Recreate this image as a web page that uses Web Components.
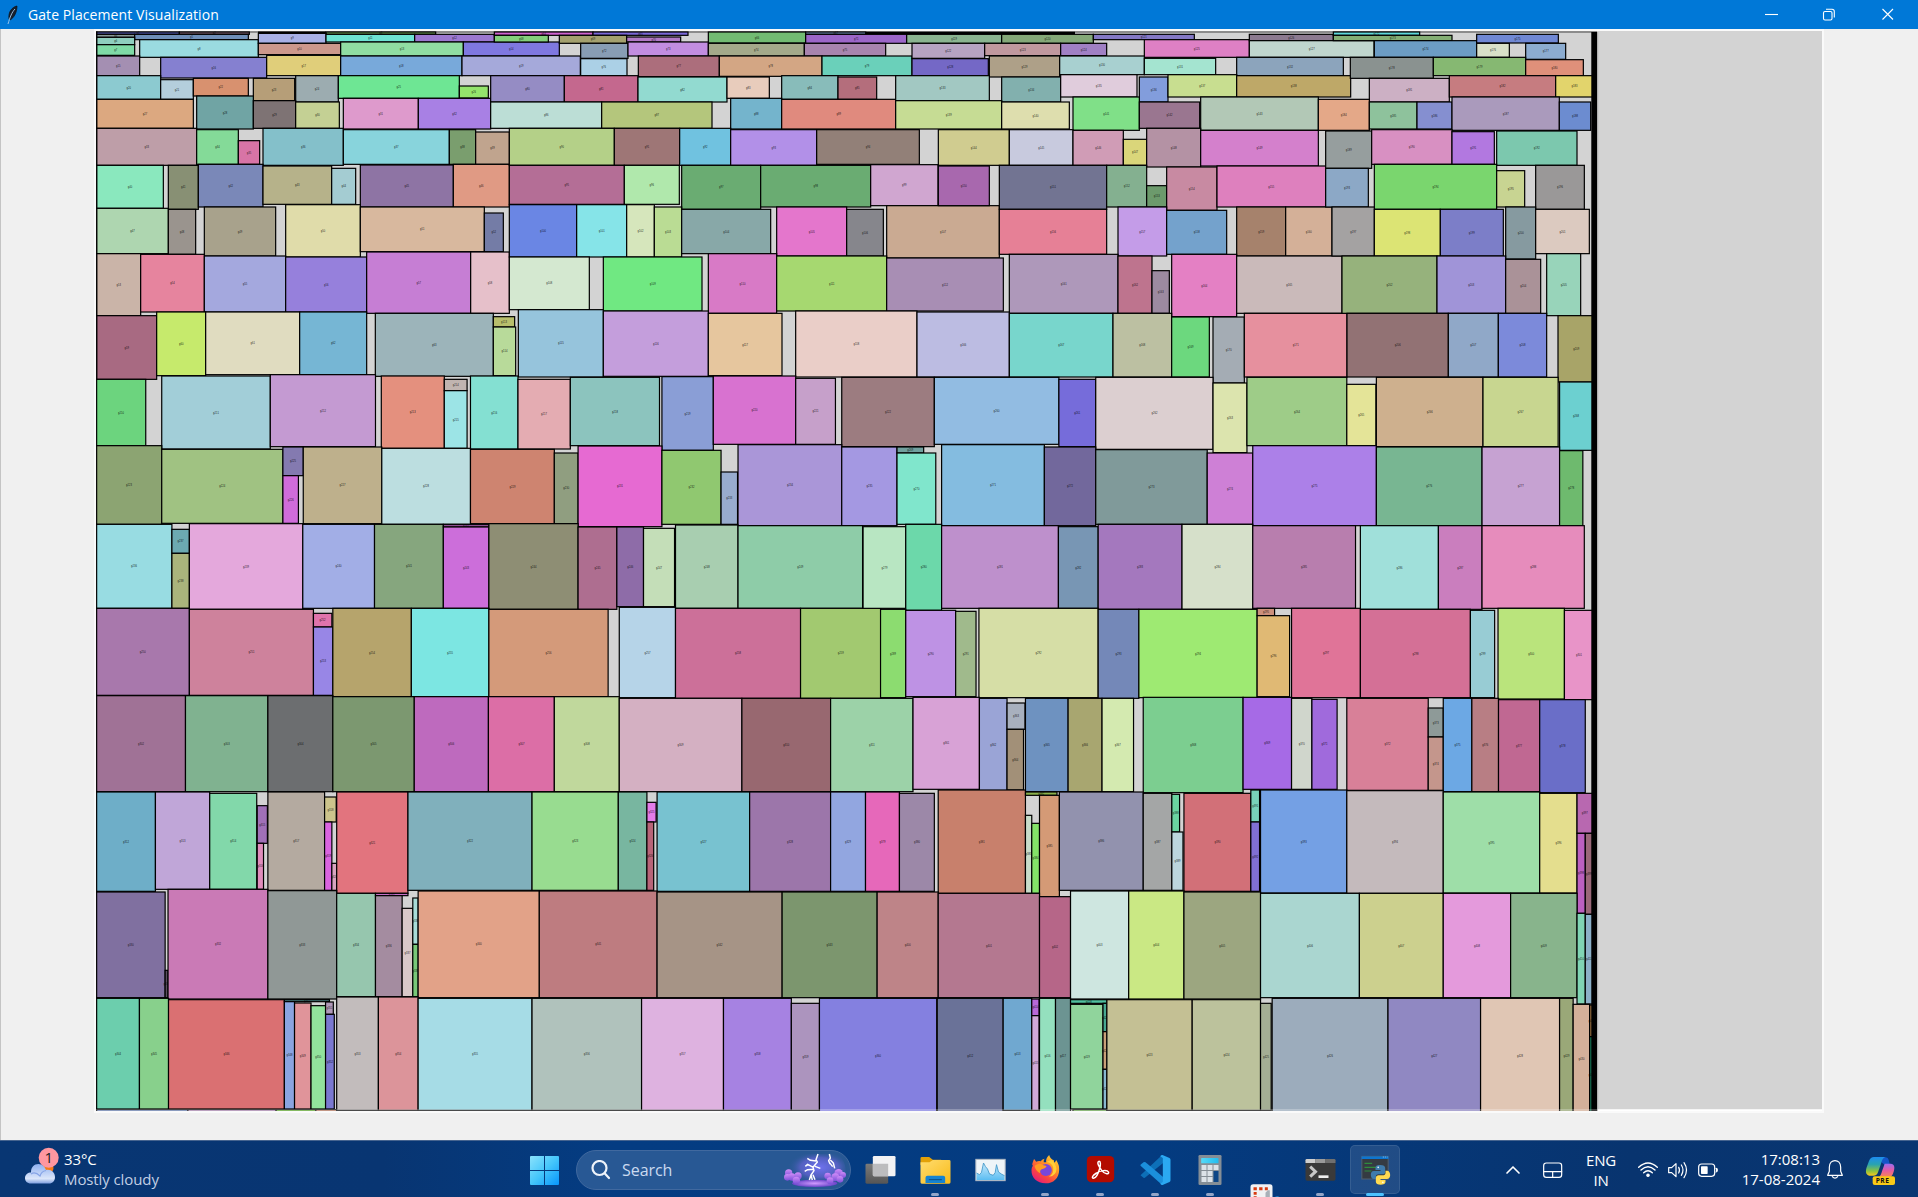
<!DOCTYPE html>
<html lang="en">
<head>
<meta charset="utf-8">
<title>Gate Placement Visualization</title>
<style>
html,body{margin:0;height:100%;overflow:hidden}
body{font-family:"Open Sans","Noto Sans",sans-serif}
</style>
</head>
<body>
<desktop-screen>
  <title-bar slot="title">Gate Placement Visualization</title-bar>
  <gate-board slot="content"></gate-board>
  <task-bar slot="taskbar"></task-bar>
</desktop-screen>
<script>
const define = (name, html, setup) => customElements.define(name, class extends HTMLElement {
  constructor() {
    super();
    this.attachShadow({ mode: 'open' }).innerHTML = html;
    if (setup) setup(this.shadowRoot, this);
  }
});

define('desktop-screen', `
<style>
:host{display:flex;flex-direction:column;width:1918px;height:1197px;overflow:hidden;background:#f0f0f0}
main{flex:1;min-height:0;display:flex;box-sizing:border-box;border-left:1px solid #c4c4c4}
</style>
<slot name="title"></slot><main><slot name="content"></slot></main><slot name="taskbar"></slot>`);

define('title-bar', `
<style>
:host{display:flex;align-items:center;height:29px;flex:none;background:#0078d7;color:#fff;font-size:14px}
.feather{width:18px;height:22px;margin:0 5px 0 5px;flex:none}
.name{flex:1;letter-spacing:.08px;line-height:29px}
.buttons{display:flex;margin-right:1px}
.buttons svg{width:58.5px;height:29px;display:block;fill:none;stroke:#fff;stroke-width:1.1}
</style>
<svg class="feather" viewBox="0 0 18 22"><path d="M12 2C7 3 3 8 4 15L5 16C9 14 12 8 12 2Z" fill="#18202c" stroke="#0a1018" stroke-width=".7"/><path d="M10 5C7 8 5 13 3 20" stroke="#a8cdee" stroke-width=".9" fill="none"/></svg>
<span class="name"><slot></slot></span>
<span class="buttons">
<svg viewBox="0 0 58.5 29"><path d="M23 14.5H36"/></svg>
<svg viewBox="0 0 58.5 29"><rect x="23.5" y="11.5" width="8.5" height="8.5" rx="1.5"/><path d="M26 9.2H32Q34.300 9.200 34.300 11.500V17.500"/></svg>
<svg viewBox="0 0 58.5 29"><path d="M23.500 9L34 19.500M34 9L23.500 19.500"/></svg>
</span>`);

/* Placement data. Each sheet has an origin and a scale; a gate is "x1 y1 x2 y2 colour" in sheet units. */
const sheets = [
[90,28,3,3,`20 12 268 19 6068c8;268 12 478 19 8a6a78;708 12 1037 19 74a85a;20 19 134 28 8a9a98;134 19 475 35 6f8fb8;20 28 134 50 8fcfbf;20 50 134 82 7fdba6;149 35 505 88 9adbe0;505 16 708 46 a8b0e6;505 46 752 80 cc988c;708 19 974 42 6ee3d3;974 19 1213 42 9c78d0;752 42 1120 84 90dda2;1120 42 1408 84 7f78e0;
20 84 149 143 a48fb2;212 88 530 150 8580d0;530 82 752 143 e0ce7a;752 84 1116 143 78a9da;1116 84 1471 143 a5a9da;
20 143 212 214 8ccad0;212 155 310 214 b4cedc;310 151 475 204 d8916f;490 151 614 218 b69e78;617 143 745 222 9cacb0;745 143 1108 211 6ee694;1108 174 1195 210 94e46c;
20 214 310 301 dca880;320 204 490 303 70a4a4;490 218 617 301 7e7374;617 222 748 301 c4d094;760 211 985 303 de9acc;985 211 1202 303 a880e4;
20 301 320 412 be9ea8;320 305 445 409 84da98;445 338 509 409 d874a6;519 301 760 412 84c0ca;760 305 1078 409 88d4dc;1078 305 1157 409 7a9e6e;1157 312 1258 409 c0a48e;
20 412 220 541 8ae8be;235 412 325 544 889074;325 409 519 537 7a88b8;519 414 725 529 b6b28a;725 421 797 529 a4ccd2;811 411 1090 537 8e74a4;1090 409 1258 537 e09a84;
20 541 235 677 aed6b0;235 544 317 679 9a948e;343 537 557 684 a8a28c;587 530 811 687 e0dcaa;811 537 1183 671 d8b89e;1183 555 1240 671 747ca6;
20 677 152 863 cab4a8;152 679 343 852 e6849e;343 684 587 852 a4a8de;587 687 830 852 9680dc;830 672 1142 856 c67ed4;1142 672 1258 856 e6c0ca;
20 863 200 1054 a86a82;200 852 347 1043 c6ea6c;347 852 629 1040 e0dcc0;629 852 830 1040 76b6d4;856 856 1210 1045 9cb4ba`],
[490,28,3,3,`13 12 309 22 cf62d0;309 12 594 22 7a68d8;655 12 947 45 72bb72;947 12 1127 19 7898c0;13 22 175 42 84d07c;208 22 410 46 a3a06e;410 27 572 42 b27ac6;947 19 1250 46 9c66c8;272 46 414 91 889db4;414 42 655 84 c28de0;655 46 943 84 a4a98a;943 46 1187 84 a884ae;
272 92 411 143 abd0e6;445 84 688 146 ac6e7c;688 84 996 145 d3a684;996 84 1266 143 6ad0ba;
2 143 223 222 958cc4;223 143 444 222 c4688e;444 147 711 222 92dad0;711 147 838 211 e8ccbc;875 143 1044 214 88bcba;1044 147 1160 214 b46e7c;
2 222 335 301 bcded6;335 222 666 301 b4c67c;722 211 875 303 74b4cc;875 214 1217 303 e08a7e;
58 301 373 412 b4d088;373 301 569 412 9e7676;569 301 722 412 70c2e0;722 305 980 412 b290e8;980 305 1288 409 928078;
58 412 403 529 b46e96;403 412 568 529 b0e8ac;575 412 812 544 6aac72;812 412 1142 537 6aac72;1142 410 1344 533 d0a6d0;
58 530 260 687 6a86e4;260 530 410 687 86e4e8;410 530 493 687 d6e6bc;493 537 575 687 badc94;575 544 842 677 88a8a8;860 537 1070 684 e476cc;1070 544 1180 684 86868c;1190 533 1528 690 caaa92;
58 687 298 845 d4e8d0;340 687 636 849 70e882;655 677 860 856 d87ac6;860 684 1190 849 a6d870;1190 690 1540 849 a88eb4;
10 866 74 897 b8be6c;10 897 77 1043 b8da9a;85 845 340 1047 96c4dc;340 849 655 1045 c49edc;655 856 876 1043 e6c69e;917 849 1281 1047 eacec8`],
[890,28,3,3,`50 19 335 46 8ab490;335 19 610 46 84a878;610 19 913 35 8478c4;66 46 284 91 b6a3c2;284 46 512 83 c0989e;512 46 650 83 a080c4;763 35 1078 88 de80c4;1078 19 1330 38 8c7a90;1078 38 1452 88 c0d6ce;
66 92 295 143 7468c6;298 84 509 147 aea088;509 84 763 140 a8d0d0;763 91 977 140 a4e4d0;1040 88 1360 143 8ca4bc;
17 143 298 218 a2c8c2;335 147 512 222 82b0ae;512 140 741 207 e0ccdc;748 147 834 222 829ddc;834 140 1040 207 c8de90;1040 143 1382 207 bea868;
17 218 335 303 c6dc94;335 222 538 303 dedeae;549 207 748 307 80e088;748 222 929 301 9a7690;932 207 1285 307 b2c8b6;
145 305 358 412 d0cc90;358 305 549 412 c8cade;549 307 700 412 d09cb6;700 334 770 412 dad67a;770 301 932 417 b492a4;932 307 1285 414 d480cc;
145 414 298 533 a868ae;328 412 650 544 727492;650 412 770 537 84b090;770 473 830 537 6c9a6c;830 417 981 547 c88aa2;981 414 1307 537 de80be;
328 544 650 679 e68096;684 537 830 684 c49ce8;830 547 1010 679 74a2cc;1040 537 1187 684 a6826c;1187 537 1326 684 d4b098;
358 679 684 856 ae98ba;684 684 786 856 be748e;786 728 838 856 9c8aa0;845 679 1040 866 e480c4;1040 684 1356 856 cababa;
81 852 358 1047 bcbce2;358 856 669 1047 78d6cc;669 856 845 1047 bcc0a2;845 867 958 1047 6cd87e;969 867 1063 1065 a4acb4;1063 856 1371 1047 e6909e`],
[1290,28,3,3,`130 12 389 22 5ed8da;130 22 486 38 84ae74;253 38 560 88 6c9cc4;560 19 805 45 7088d4;560 46 658 88 d8e0c8;707 46 827 94 8cacd0;
181 88 430 151 8a9290;430 88 707 143 86b872;707 95 880 143 df907a;
238 151 478 222 ccb0c4;478 143 797 207 c67c80;797 143 910 207 e2d46c;
85 214 238 307 e4a888;238 222 381 303 8ec29c;381 222 486 303 858fd0;486 207 808 307 aa9abc;808 222 902 307 6c8cd0;
107 309 245 421 969e9e;245 305 486 409 d890c2;486 311 613 409 b278e0;620 309 861 412 7cc8ae;
107 421 235 537 8ca8c6;253 409 620 544 7ad66e;620 428 704 537 c8d492;737 412 883 544 9a9898;
126 537 253 684 a4a2a2;253 544 451 684 dce474;451 544 640 684 7c7ec8;647 537 737 693 869aa0;737 544 898 677 dccac0;
156 684 441 856 96b27c;441 684 647 856 a094d8;647 694 752 856 aa9298;770 677 872 863 98d4ba;
171 856 475 1047 927274;475 856 625 1047 90a8c8;625 856 770 1047 7c8ada;804 863 914 1062 a8a468`],
[90,370,2.0632,3,`13 28 115 227 6cd47e;148 18 372 237 a2ced8;372 14 589 230 c49ad2;601 18 731 235 e4907e;731 28 778 62 c0b4b0;731 62 778 235 9ce4e6;785 18 883 237 84e0d2;883 28 991 237 e4acb2;991 22 1175 227 8cc4be;1180 20 1286 241 8a9ed6;1286 18 1456 223 d872d0;1456 25 1538 223 c6a0ca;1551 22 1742 230 9c7c80;
13 227 148 463 8ca472;148 238 398 460 a0c282;398 231 440 317 847ab0;398 317 430 460 d06cda;440 231 602 461 beb08c;602 235 785 463 bcdee0;785 238 958 461 ce8470;958 249 1007 461 909e80;1007 228 1180 470 e66ad2;1180 241 1302 463 90c870;1302 306 1336 463 98acce;1337 224 1551 467 aa96d8;1551 231 1665 467 a498e2;
13 463 169 715 98dce2;169 478 205 550 6caab2;169 550 205 715 aab47c;205 461 439 718 e4a8dc;439 463 587 715 a2aee6;587 463 729 715 86a67e;729 463 823 471 8c5090;729 471 823 715 cc6eda;823 461 1007 718 8e8e74;1007 471 1087 718 ae6e90;1087 471 1142 710 8e6ca8;1142 475 1206 710 c4deb8;1208 465 1337 715 a8ceb0;1337 467 1594 715 8ecca8;
13 715 205 976 a878ac;205 718 461 976 ce829c;461 730 499 771 e074ac;461 771 501 976 9886e6;501 715 663 980 b6a46c;663 715 823 980 7ce6e2;823 718 1069 980 d49a7a;1092 712 1208 983 b6d4e8;1208 715 1466 985 cc7099;1466 715 1632 985 a2c970`],
[850,370,2.0632,3,`174 22 431 223 92bce2;431 28 507 230 766cda;507 22 749 238 dccfd0;749 39 819 248 dce4ae;819 22 1025 227 9ecc88;1025 43 1085 227 e4e498;1086 22 1306 230 ceb08e;1306 22 1461 230 c8d690;1464 36 1532 241 6cd0d0;
97 231 152 249 70a09e;97 249 177 463 80e6cc;189 224 401 467 84bce0;401 231 507 467 72689c;507 239 737 463 809a9a;737 249 831 463 ce80d6;831 227 1086 467 ac80e8;1086 231 1304 467 78b692;1304 231 1464 467 c6a2d2;1464 242 1512 467 6eba6e;
27 470 115 715 b8e6c2;115 463 189 721 6cd8aa;189 467 430 715 be90cc;430 470 512 715 7896b4;512 463 685 718 a478be;685 463 831 718 d6e0ca;831 467 1043 715 b87eae;1053 467 1214 718 a0e0da;1214 467 1304 718 ca7ebe;1304 467 1515 715 e68cbc;
63 718 115 983 8cdc70;115 721 218 980 be92e4;218 724 260 980 a0ba8c;266 715 512 983 d6dea6;512 718 596 985 7488b8;596 718 840 983 9eea72;840 715 876 737 cc907c;840 737 907 980 e0b974;911 715 1053 983 e07498;1053 718 1280 983 d47096;1280 721 1330 983 98ccd4;1337 715 1474 987 bae47c;1474 721 1534 989 e894c8`],
[90,740,2.0632,3,`13 1109 202 1120 8aa8e8;202 1109 384 1120 e0b0e8;384 1109 466 1120 80e040;466 1109 509 1120 f0a080;
13 -133 197 155 a07296;197 -133 367 155 80b290;367 -133 501 155 6c6e70;501 -130 669 155 7c9870;669 -130 822 155 be6abe;822 -130 958 155 dc6ea6;958 -130 1092 155 c0d89c;1092 -125 1345 155 d4b0c2;1345 -125 1528 155 986870;1528 -125 1698 155 9cd2a8;
13 156 135 454 6eaec8;135 156 247 448 c0a6d8;247 160 344 448 82d8aa;345 197 366 310 a070b8;345 310 358 448 e08cbc;367 156 484 451 b4aaa0;484 171 508 246 ccc48c;484 246 499 451 da64e0;499 370 509 451 d8a4c0;509 156 656 460 e2747e;656 156 912 451 80b0bc;912 156 1090 451 98dc90;1090 156 1149 451 78b6a0;1149 187 1168 246 e47ce8;1149 246 1163 451 b86478;1170 156 1361 454 78c2d0;1361 156 1528 454 9c76aa;1528 156 1600 454 92a6e0;
13 456 155 773 8070a0;155 691 161 773 5c5060;161 448 367 777 ca7ab6;367 452 509 777 909896;509 460 589 770 96c6ae;589 460 656 467 c870c8;589 467 644 770 a48ca0;644 505 666 770 d8c8c8;666 474 677 613 a8dcd8;666 613 677 770 78c878;677 453 927 773 e2a288;927 453 1170 773 be7c80;1170 456 1428 773 a69486;1428 456 1624 773 7c966e;
13 775 102 1107 6ccead;102 775 162 1107 88d08c;162 779 401 1107 da7072;401 779 494 785 4a8080;401 785 422 1107 8aa4e0;422 789 456 1107 e0949a;456 797 486 1107 92e29c;486 786 502 823 b098b8;486 823 504 1107 7a78d0;509 771 595 1111 c2bcbc;595 771 677 1111 dc949a;677 775 912 1111 a6dce6;912 775 1138 1111 b0c2bc;1138 775 1307 1111 deb2e0;1307 775 1447 1111 a682e2;1447 790 1505 1111 ac94be;1505 775 1747 1120 8480e0`],
[850,740,2.0632,3,`460 1109 530 1120 90e070;
130 -128 267 148 d8a2d6;267 -125 324 155 9aa4d6;324 -111 361 -32 a8b0be;324 -32 358 150 a29078;362 -125 450 155 6e92c0;450 -125 520 155 a8a670;520 -125 585 155 d4eab0;605 -128 811 158 7cce90;811 -128 911 148 a66ae6;911 -125 953 148 d0d6cc;953 -122 1005 148 a06adc;1025 -125 1193 151 d88098;1193 -96 1224 -9 8e9a98;1193 -9 1224 151 c4968c;1224 -125 1283 155 6ca8e4;1283 -125 1338 155 b87e84;1338 -121 1423 155 c06892;1423 -121 1517 158 6a6ec8;
32 156 102 454 e668ba;102 160 174 454 9c88a8;182 150 362 460 c8806c;362 156 427 166 8ab04c;362 226 375 460 c8dcca;375 250 391 460 84e468;391 166 432 470 d49a76;432 156 605 451 9292ae;605 160 664 451 a4a6a6;664 163 680 276 6ad4a0;664 276 687 451 bcd6de;689 160 827 454 d27078;827 150 845 246 78d2ba;827 246 845 454 8070d4;847 150 1025 459 74a0e4;1025 152 1224 460 c4babc;1224 156 1423 459 9edea8;1423 160 1500 459 e4de8e;1500 160 1532 280 b868b0;1500 280 1517 520 bc60c0;1517 280 1532 523 9a6878;
56 456 182 773 be8488;182 460 391 773 b47890;391 470 455 773 b66688;455 453 575 777 cee6e0;575 453 689 777 cae884;689 456 847 777 9ca680;847 460 1051 773 aad6d0;1051 460 1224 773 ccd08e;1224 460 1363 773 e49adc;1363 460 1500 773 88b48c;1500 520 1517 792 80d4b4;1517 523 1532 792 8cb0c8;
180 775 316 1120 6a7298;316 775 375 1111 70a8d0;375 777 390 827 b868d8;375 827 390 1111 d0a8d8;391 775 424 1120 94e0be;424 775 455 1120 6c9492;455 779 530 790 50c0a0;455 793 522 1107 90d49c;522 790 530 875 48a890;522 875 530 988 c8a078;522 988 530 1107 88b8d0;530 779 706 1111 c4c094;706 779 847 1111 bcc29c;847 790 869 1111 a4ae94;871 775 1110 1120 9cacbc;1110 775 1301 1120 9088c2;1301 775 1464 1120 e0c6b4;1464 775 1492 1120 9aa878;1492 793 1526 1120 d4b09a;1526 795 1534 890 9a7040;1526 890 1534 1120 187858`]];

define('gate-board', `
<style>
:host{display:block;margin:2px 0 0 95px;width:1726px;height:1080px;background:#d3d3d3;overflow:hidden;outline:2px solid #fafafa;outline-offset:-.5px}
svg{display:block}
.gate{stroke:#000;stroke-width:1.2}
text{font:2.7px "Liberation Sans",sans-serif;text-anchor:middle;fill:#000;fill-opacity:.85}
</style>
<svg width="1726" height="1080" viewBox="96 31 1726 1080"></svg>`, root => {
  let n = 0, out = '';
  for (const [ox, oy, sx, sy, rows] of sheets) {
    for (const row of rows.split(';')) {
      const [a, b, c, d, fill] = row.trim().split(' ');
      const x = ox + a / sx, y = oy + b / sy, w = (c - a) / sx, h = (d - b) / sy;
      out += `<rect class="gate" x="${x.toFixed(2)}" y="${y.toFixed(2)}" width="${w.toFixed(2)}" height="${h.toFixed(2)}" fill="#${fill}"/>`;
      if (y < 1105) out += `<text x="${(x + w / 2).toFixed(1)}" y="${(y + h / 2 + 1).toFixed(1)}">g${++n}</text>`;
    }
  }
  root.querySelector('svg').innerHTML = `<path d="M96 32H1597" stroke="#444" stroke-width="1"/>${out}
  <path d="M258 32.600H326M865.700 33H1075" stroke="#000" stroke-width="2.400"/>
  <rect x="1591.300" y="32" width="6" height="1080"/><rect x="1597.300" y="32" width="1" height="1080" fill="#bbb"/>
  <rect x="96" y="31" width="1.600" height="1080" fill-opacity=".4"/><rect x="96" y="1109" width="1726" height="2" fill="#fff" fill-opacity=".25"/>
  <rect x="1598" y="1109.300" width="225" height="2" fill="#fff"/>`;
});

define('task-cell', `
<style>
:host{display:block;position:relative;width:55px;height:57px;flex:none}
:host([active]) .plate{display:block}
.plate{display:none;position:absolute;left:2.5px;top:5px;width:48px;height:47px;border-radius:5px;background:#ffffff1c;border:1px solid #ffffff18}
.mark{display:none;position:absolute;bottom:1px;height:3px;border-radius:2px;left:50%;transform:translateX(-50%);width:8px;background:#93a5c8}
:host([open]) .mark{display:block}
:host([active]) .mark{display:block;width:18px;background:#4cc2ff}
::slotted(svg){position:relative;display:block;width:55px;height:57px}
</style><div class="plate"></div><slot></slot><div class="mark"></div>`);

define('weather-widget', `
<style>
:host{display:flex;width:506px;height:57px;color:#fff;font-size:15px;line-height:20px}
svg{width:40px;height:57px;margin-left:22px;flex:none}
.t{margin-left:2px;padding-top:9px;letter-spacing:-.1px}
.t div+div{color:#c2cfe4}
.n{font:15px "Open Sans",sans-serif;fill:#222}
</style>
<svg viewBox="22 0 40 57"><defs><linearGradient id="c" x2="0" y2="1"><stop stop-color="#8fb0f0"/><stop offset=".75" stop-color="#dbe6fa"/><stop offset="1" stop-color="#7fa0e0"/></linearGradient></defs>
<circle cx="48" cy="28" r="5.500" fill="#f77a18"/>
<path d="M31 43.500C27 43.500 25 41 25 38C25 34.500 28 32.500 31 32.500C31 27 34 24 38.500 24C42.500 24 45 27 46 30C51 29 55 32.500 55 37C55 41 52.500 43.500 49 43.500Z" fill="url(#c)"/><path d="M31 34C34 32 37 33 40 36C41 33 43 31 46 30.500" stroke="#86a4e6" stroke-width="1.200" fill="none"/>
<circle cx="48.700" cy="17.800" r="10" fill="#ff97a0"/><text class="n" x="48.900" y="23.300" text-anchor="middle">1</text></svg>
<div class="t"><div>33°C</div><div>Mostly cloudy</div></div>`);

define('search-box', `
<style>
:host{display:flex;align-items:center;box-sizing:border-box;width:275px;height:40px;margin:10px 1.8px 0 3.500px;border:1px solid #41699f;border-radius:20px;background:#285894;color:#cbdaf0;font-size:16px;flex:none}
.m{width:20px;height:20px;margin-left:14px}
span{margin-left:11px;flex:1;letter-spacing:-.05px}
.a{width:64px;height:34px;margin-right:3px}
</style>
<svg class="m" viewBox="0 0 20 20" fill="none" stroke="#eef3fa" stroke-width="2.200" stroke-linecap="round"><circle cx="8.500" cy="8" r="7"/><path d="M13.600 13.200L18 18"/></svg>
<span>Search</span>
<svg class="a" viewBox="848 48 192 102"><defs><radialGradient id="g" cx=".55" cy=".45" r=".55"><stop stop-color="#6f72ee"/><stop offset=".6" stop-color="#5360c0"/><stop offset="1" stop-color="#285894" stop-opacity="0"/></radialGradient><linearGradient id="p" x2="0" y2="1"><stop stop-color="#cf8cf8"/><stop offset="1" stop-color="#7a4fd8"/></linearGradient><radialGradient id="f"><stop stop-color="#d09aff"/><stop offset="1" stop-color="#6a44c8"/></radialGradient></defs>
<path d="M862 51H1005C1025 58 1036 78 1036 102L1026 140H872Z" fill="url(#g)"/>
<ellipse cx="943" cy="139" rx="68" ry="11" fill="url(#f)"/>
<g fill="url(#p)"><circle cx="865" cy="108" r="11"/><circle cx="861" cy="121" r="10"/><circle cx="875" cy="120" r="11"/><circle cx="893" cy="117" r="11"/><circle cx="888" cy="130" r="11"/><circle cx="1015" cy="109" r="13"/><circle cx="1028" cy="114" r="9"/><circle cx="1005" cy="121" r="12"/><circle cx="982" cy="117" r="10"/><circle cx="989" cy="131" r="10"/><circle cx="1019" cy="127" r="10"/></g>
<g fill="none" stroke="#fff" stroke-linejoin="round" stroke-width="4.400"><path d="M953 51L947 68L951 75L938 91L941 101L932 114L936 129M947 72L930 70L921 64M939 91L922 82L915 88M941 97L922 98L913 103M944 88L960 94M932 114L927 129M938 113L944 128"/><path d="M987 51L990 63L985 71L989 81M990 69L999 78L1003 94M987 76L997 89"/></g></svg>`);

define('system-tray', `
<style>
:host{display:flex;height:57px;width:478px;margin-left:auto;color:#fff;font-size:15px;line-height:20px;flex:none}
svg{display:block;height:57px;flex:none;fill:none;stroke:#fff;stroke-width:3.600;stroke-linecap:round;stroke-linejoin:round}
.lang{width:56px;text-align:center;padding-top:9.500px;letter-spacing:-.2px}
.clock{width:83px;text-align:right;padding-top:8.500px;margin-left:16px;margin-right:-1px;white-space:nowrap}
.pre{font:bold 20px "Open Sans",sans-serif;fill:#111;stroke:none;letter-spacing:1.500px}
</style>
<svg style="width:133px" viewBox="0 9 399 171"><path d="M201 108L219 90L237 108" stroke-width="5"/><rect x="311" y="78" width="54" height="43" rx="8"/><path d="M311 104H365M338 104V121"/></svg>
<div class="lang">ENG<br>IN</div>
<svg style="width:92px" viewBox="567 9 276 171"><g stroke-width="4.200"><path d="M596 91Q624 65 652 91M603 99Q624 79 645 99M611 107Q624 95 637 107"/></g><circle cx="624" cy="115" r="3.500" fill="#fff"/>
<path d="M686 92H695L708 80V119L695 107H686Z"/><path d="M716 91Q721 99 716 108M724 84Q734 99 724 115M732 77Q747 99 732 122"/>
<rect x="776" y="81" width="48" height="37" rx="9"/><rect x="783" y="88" width="20" height="23" rx="2" fill="#fff" stroke="none"/><path d="M828 94Q832 94 832 99T828 105" fill="#fff"/></svg>
<div class="clock">17:08:13<br>17-08-2024</div>
<svg style="width:99px" viewBox="1137 9 297 171"><path d="M1163 115L1168 103V91C1168 64 1202 64 1202 91V103L1207 115Z"/><path d="M1177 119Q1185 128 1193 119"/>
<g stroke="none"><defs><linearGradient id="l" x2="0" y2="1"><stop stop-color="#1d8cf0"/><stop offset=".4" stop-color="#2aa3b0"/><stop offset=".75" stop-color="#8bc240"/><stop offset="1" stop-color="#f7c81a"/></linearGradient><linearGradient id="r" x2="0" y2="1"><stop stop-color="#9a6cf0"/><stop offset=".5" stop-color="#e75ba0"/><stop offset="1" stop-color="#f8894c"/></linearGradient></defs>
<path d="M1330 61H1336C1346 61 1346 70 1349 80L1340 88L1322 74Z" fill="#1455c8"/><path d="M1334 80H1352C1364 80 1365 92 1361 104C1358 116 1352 121 1344 122H1315C1322 118 1324 110 1326 103Z" fill="url(#r)"/><path d="M1302 60H1336C1328 63 1326 70 1323 80L1314 106C1311 115 1306 116 1300 116H1288C1277 114 1276 103 1280 91L1287 72C1290 64 1295 60 1302 60Z" fill="url(#l)"/>
<rect x="1298" y="118" width="67" height="26" rx="6" fill="#f8c916"/><text class="pre" x="1307" y="138.500">PRE</text></g></svg>`);

define('task-bar', `
<style>
:host{display:flex;box-sizing:border-box;height:57px;flex:none;align-items:flex-start;background:linear-gradient(90deg,#083673 0,#083572 20%,#043c82 32%,#043b80 60%,#08346f 85%,#093672);box-shadow:inset 0 1px #46648f}
.start{width:66.500px;height:57px;flex:none}
</style>
<weather-widget></weather-widget>
<svg class="start" viewBox="18 9 199.500 171"><defs><linearGradient id="w" gradientUnits="userSpaceOnUse" x1="90" y1="57" x2="177" y2="144"><stop stop-color="#8be2fb"/><stop offset=".5" stop-color="#45c6fb"/><stop offset="1" stop-color="#0795fb"/></linearGradient></defs><path d="M93 57H132V99H90V60Q90 57 93 57ZM135 57H174Q177 57 177 60V99H135ZM90 102H132V144H93Q90 144 90 141ZM135 102H177V141Q177 144 174 144H135Z" fill="url(#w)"/></svg>
<search-box></search-box>
<task-cell><svg viewBox="1060.500 9 165 171"><defs><linearGradient id="d" x2="0" y2="1"><stop stop-color="#7a7a7a"/><stop offset="1" stop-color="#555"/></linearGradient></defs><rect x="1098" y="80" width="68" height="60" rx="4" fill="url(#d)"/><rect x="1120" y="57" width="68" height="61" rx="4" fill="#f2f2f4"/><path d="M1120 80H1166V118H1124Q1120 118 1120 114Z" fill="#bcbcbe"/></svg></task-cell>
<task-cell open><svg viewBox="1225.500 9 165 171"><defs><linearGradient id="y" x2="1" y2="1"><stop stop-color="#ffdc70"/><stop offset="1" stop-color="#f9bb18"/></linearGradient></defs><path d="M1263 64Q1263 60 1267 60H1289L1300 68H1325V84H1263Z" fill="#e3a108"/><path d="M1263 76H1290L1300 69H1349Q1353 69 1353 73V136Q1353 140 1349 140H1267Q1263 140 1263 136Z" fill="url(#y)"/><path d="M1278 138V122Q1278 116 1284 116H1331Q1337 116 1337 122V138Z" fill="#1583d2"/><path d="M1288 128H1327" stroke="#0a4e86" stroke-width="3"/></svg></task-cell>
<task-cell><svg viewBox="10.500 9 165 171"><defs><linearGradient id="s" x2="0" y2="1"><stop stop-color="#c8e9fb"/><stop offset="1" stop-color="#5bbdf2"/></linearGradient></defs><rect x="49" y="67" width="88" height="64" fill="#eef4f8" stroke="#aeb8c2" stroke-width="3"/><path d="M51 108L60 113L66 106L72 78L78 89L84 96L90 111L101 115L107 107L111 83L117 105L127 112L135 116V129H51Z" fill="url(#s)"/><path d="M51 108L60 113L66 106L72 78L78 89L84 96L90 111L101 115L107 107L111 83L117 105L127 112L135 116" fill="none" stroke="#3f95c8" stroke-width="2.500"/></svg></task-cell>
<task-cell open><svg viewBox="175.500 9 165 171"><defs><linearGradient id="x" x1="1" y1="0" x2=".3" y2="1"><stop stop-color="#ffe13c"/><stop offset=".4" stop-color="#ff9a24"/><stop offset=".75" stop-color="#fb4540"/><stop offset="1" stop-color="#e52176"/></linearGradient></defs><path d="M218 82Q222 68 224 66L230 74Q238 71 244 73Q246 67 255 65Q251 71 253 76L260 76Q258 64 269 54Q272 66 283 70L284 77Q289 74 290 69Q300 84 299 98C299 124 281 139 258 139C232 139 215 121 216 99Q216 91 220 86Z" fill="url(#x)"/><circle cx="259" cy="99" r="18" fill="#7847dc"/><path d="M225 86Q241 76 250 84L261 87Q260 93 249 96Q240 98 242 109Q228 102 225 86Z" fill="#ff9b22"/><path d="M261 75Q277 77 281 91Q284 111 268 119Q291 116 291 95Q288 78 276 68Z" fill="#ffcf38"/></svg></task-cell>
<task-cell open><svg viewBox="340.500 9 165 171"><rect x="382" y="57" width="82" height="79" rx="14" fill="#b30b00"/><path d="M419 73C409 75 421 93 427 101C436 113 450 112 447 105C443 97 421 101 411 108C398 116 396 123 402 124C411 123 418 104 421 93C423 83 424 73 419 73Z" fill="none" stroke="#fff" stroke-width="4.500"/></svg></task-cell>
<task-cell open><svg viewBox="505.500 9 165 171"><path d="M543 115L552 122Q555 124 558 121L611 78V57L608 54Z" fill="#0d6fb8"/><path d="M543 83L552 76Q555 74 558 76L611 120V142L608 144L543 86Z" fill="#1b8fdc"/><path d="M609 54L630 63Q633 65 633 68V130Q633 133 630 135L609 144Q605 144 602 140L610 135V63L602 58Q605 54 609 54Z" fill="#2ba9f2"/></svg></task-cell>
<task-cell open><svg viewBox="670.500 9 165 171"><defs><linearGradient id="k" x2="1"><stop stop-color="#55daf8"/><stop offset="1" stop-color="#22bcef"/></linearGradient></defs><rect x="717" y="54" width="69" height="90" rx="4" fill="#858e96"/><rect x="725" y="63" width="52" height="16" rx="2" fill="url(#k)"/><g fill="#dce2e8"><path d="M726 84h15v15h-15zM744 84h15v15h-15zM762 84h15v15h-15zM726 102h15v15h-15zM744 102h15v15h-15zM726 120h15v15h-15zM744 120h15v15h-15z"/></g><rect x="762" y="102" width="15" height="33" fill="#0e4686"/></svg></task-cell>
<task-cell><svg viewBox="835.500 9 165 171"><rect x="873" y="142" width="66" height="60" rx="8" fill="#f1f2f4"/><path d="M882 155H925" stroke="#d83b10" stroke-width="9" stroke-dasharray="10 7"/><path d="M887 165V190" stroke="#d83b10" stroke-width="9" stroke-dasharray="8 5"/><path d="M918 180V167L925 160H931V180Z" fill="#a9b0b8"/><path d="M946 180Q954 176 960 180Z" fill="#2296dc"/></svg></task-cell>
<task-cell open><svg viewBox="1000.500 9 165 171"><rect x="1038" y="66" width="90" height="65" rx="5" fill="#3a3a3a"/><path d="M1042 66H1068V78H1038V70Q1038 66 1042 66Z" fill="#cfcfcf"/><path d="M1068 66H1098V78H1068Z" fill="#9a9a9a"/><path d="M1098 66H1124Q1128 66 1128 70V78H1098Z" fill="#6f6f6f"/><path d="M1052 89L1068 104L1052 119" fill="none" stroke="#c8c8c8" stroke-width="9"/><path d="M1077 119H1107" stroke="#eee" stroke-width="8"/></svg></task-cell>
<task-cell active><svg viewBox="1165.500 9 165 171"><rect x="1207" y="58" width="79" height="68" fill="#353b42" stroke="#53616f" stroke-width="3"/><path d="M1206 62H1287" stroke="#0d75d0" stroke-width="8"/><path d="M1270 60H1284" stroke="#d7e8f8" stroke-width="2" stroke-dasharray="3 3"/><path d="M1215 79H1238M1215 91H1254M1215 102H1236" stroke="#2f8c3c" stroke-width="3.500"/><path d="M1262 84C1249 84 1248 89 1248 94V99H1263V102H1243C1236 102 1234 108 1234 113C1234 121 1238 126 1243 126H1249V119C1249 114 1253 112 1257 112H1270C1274 112 1277 109 1277 105V93C1277 87 1272 84 1262 84Z" fill="#3f7cac"/><path d="M1264 143C1277 143 1278 138 1278 133V129H1263V126H1283C1290 126 1292 119 1292 114C1292 106 1288 101 1283 101H1278V108C1278 113 1274 115 1270 115H1257C1253 115 1249 118 1249 122V134C1249 140 1254 143 1264 143Z" fill="#ffda50"/><circle cx="1256" cy="91" r="2.500" fill="#fff"/><circle cx="1270" cy="136" r="2.500" fill="#fff"/></svg></task-cell>
<system-tray></system-tray>`);
</script>
</body>
</html>
